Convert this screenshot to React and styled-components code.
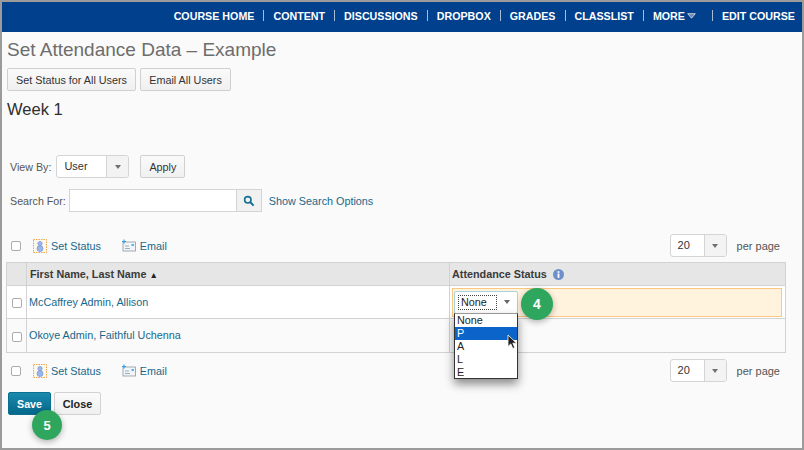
import React from "react";
import styled, { createGlobalStyle } from "styled-components";

const Global = createGlobalStyle`
  html, body { margin: 0; padding: 0; background: #fff; }
  body { font-family: "Liberation Sans", Arial, sans-serif; }
  * { box-sizing: border-box; }
`;

const Frame = styled.div`
  position: relative;
  width: 804px;
  height: 450px;
  border: 2px solid #9b9b9b;
  background: #fafafa;
  overflow: hidden;
`;
const TopBar = styled.nav`
  height: 30px;
  background: #00408c;
  display: flex;
  align-items: center;
  justify-content: flex-end;
  padding: 0 7px 3px 0;
  color: #fff;
  font-size: 10.7px;
  font-weight: 700;
`;
const NavItem = styled.span`
  display: inline-flex;
  align-items: center;
  white-space: nowrap;
`;
const NavSep = styled.span`
  width: 1px;
  height: 11px;
  background: #a9bcd6;
  margin: 0 9px 0 ${(p) => p.$left || 9}px;
`;
const Content = styled.main`
  padding: 0 22px 0 5px;
`;
const Title = styled.h1`
  margin: 0;
  height: 36px;
  line-height: 35px;
  font-size: 19px;
  font-weight: 400;
  color: #6d6d6d;
  white-space: nowrap;
`;
const ButtonRow = styled.div`
  display: flex;
  gap: ${(p) => p.$gap || 4}px;
`;
const Button = styled.button`
  height: 23px;
  width: ${(p) => p.$w}px;
  margin-left: ${(p) => p.$ml || 0}px;
  padding: 0;
  border: 1px solid #d0d0d0;
  border-radius: 2px;
  background: linear-gradient(#fafafa, #f0f0f0);
  font: 400 10.8px "Liberation Sans", Arial, sans-serif;
  color: #333;
`;
const Heading = styled.h2`
  margin: 0 0 26px;
  height: 38px;
  line-height: 36px;
  font-size: 16.5px;
  font-weight: 400;
  color: #2e2e2e;
`;
const FormRow = styled.div`
  display: flex;
  align-items: center;
  height: 23px;
  margin-left: 3px;
  margin-bottom: ${(p) => p.$mb || 0}px;
  font-size: 10.7px;
  color: #555;
`;
const SelectBox = styled.div`
  display: flex;
  width: ${(p) => p.$w}px;
  height: 23px;
  margin-left: ${(p) => p.$ml || 0}px;
  border: 1px solid #d4d4d4;
  border-radius: 3px;
  background: #fff;
  overflow: hidden;
  font-size: 11px;
  color: #333;
`;
const SelectValue = styled.span`
  flex: 1;
  padding-left: 7px;
  line-height: 21px;
`;
const SelectArrow = styled.span`
  width: 22px;
  display: flex;
  align-items: center;
  justify-content: center;
  border-left: 1px solid #d4d4d4;
  background: #f3f3f3;
  &::after {
    content: "";
    border-left: 3.5px solid transparent;
    border-right: 3.5px solid transparent;
    border-top: 4px solid #707070;
  }
`;
const SearchInput = styled.input`
  width: 167px;
  height: 23px;
  margin-left: 3px;
  border: 1px solid #d4d4d4;
  border-right: 0;
  background: #fff;
  padding: 0;
`;
const SearchBtn = styled.span`
  width: 26px;
  height: 23px;
  display: flex;
  align-items: center;
  justify-content: center;
  background: #f1f1f1;
  border: 1px solid #d4d4d4;
`;
const LinkText = styled.a`
  color: #17688a;
  font-size: 10.8px;
  white-space: nowrap;
  margin-left: ${(p) => p.$ml || 0}px;
`;
const Toolbar = styled.div`
  display: flex;
  align-items: center;
  height: 23px;
  margin-bottom: ${(p) => p.$mb || 0}px;
  padding-left: 4px;
`;
const Check = styled.input.attrs({ type: "checkbox" })`
  appearance: none;
  display: block;
  width: 10px;
  height: 10px;
  margin: 0;
  border: 1px solid #ababab;
  border-radius: 2px;
  background: #fff;
  flex: none;
`;
const ToolIcon = styled.svg`
  flex: none;
  margin-left: ${(p) => p.$ml}px;
`;
const ToolGap = styled.span`
  width: 21px;
  flex: none;
`;
const PerPage = styled.span`
  font-size: 11px;
  color: #555;
  margin-left: 10px;
  white-space: nowrap;
`;
const Spacer = styled.span`
  flex: 1;
`;
const Table = styled.table`
  width: 780px;
  margin: 0 0 6px -1px;
  border-collapse: collapse;
  table-layout: fixed;
`;
const ColTick = styled.col`
  width: 20px;
`;
const ColName = styled.col`
  width: 423px;
`;
const HeadCell = styled.th`
  height: 23px;
  background: #e6e6e6;
  border: 1px solid #d2d2d2;
  text-align: left;
  padding: 0 0 1px ${(p) => p.$left || 3}px;
  font-size: 10.8px;
  font-weight: 700;
  color: #3a3a3a;
  white-space: nowrap;
`;
const InfoIcon = styled.svg`
  margin-left: 6px;
  vertical-align: -2px;
`;
const Row = styled.tr`
  background: ${(p) => (p.$white ? "#fff" : "#fafafa")};
`;
const Cell = styled.td`
  height: ${(p) => p.$h}px;
  border: 1px solid #d2d2d2;
  padding: ${(p) => p.$pad || "0 0 3px 2px"};
  vertical-align: middle;
`;
const SortMark = styled.span`
  font-size: 8.5px;
  margin-left: 3px;
  color: #222;
`;
const Highlight = styled.div`
  height: 29px;
  margin-left: 2px;
  width: 330px;
  border: 1px solid #f9c77f;
  background: #fff3de;
  padding: 2px 1px;
`;
const FocusSelect = styled.div`
  display: flex;
  width: 64px;
  height: 23px;
  border: 1px solid #a9d3de;
  border-radius: 2px;
  background: #fff;
`;
const FocusValue = styled.span`
  width: 39px;
  height: 15px;
  margin: 3px 0 0 3px;
  border: 1px dotted #444;
  line-height: 13px;
  padding-left: 2px;
  font-size: 10.8px;
  color: #222;
`;
const FocusArrow = styled.span`
  flex: 1;
  display: flex;
  align-items: center;
  justify-content: center;
  &::after {
    content: "";
    border-left: 3.5px solid transparent;
    border-right: 3.5px solid transparent;
    border-top: 4px solid #666;
  }
`;
const Menu = styled.ul`
  position: absolute;
  left: 452px;
  top: 311px;
  width: 64px;
  margin: 0;
  padding: 0;
  height: 66px;
  list-style: none;
  background: #fff;
  border: 1px solid #333;
  border-top-color: #999;
  box-shadow: 0 5px 9px rgba(0, 0, 0, 0.45);
`;
const MenuItem = styled.li`
  height: 13px;
  line-height: 13px;
  padding-left: 2px;
  font-size: 10.8px;
  background: ${(p) => (p.$active ? "#0a64c9" : "transparent")};
  color: ${(p) => (p.$active ? "#fff" : "#222")};
`;
const Cursor = styled.svg`
  position: absolute;
  left: 505px;
  top: 332px;
`;
const Badge = styled.span`
  position: absolute;
  left: ${(p) => p.$x}px;
  top: ${(p) => p.$y}px;
  width: ${(p) => p.$d}px;
  height: ${(p) => p.$d}px;
  border-radius: 50%;
  background: #2fa65d;
  color: #fff;
  font-size: ${(p) => p.$fs}px;
  font-weight: 700;
  display: flex;
  align-items: center;
  justify-content: center;
  box-shadow: 0 2px 6px rgba(0, 0, 0, 0.3);
`;
const Save = styled.button`
  width: 43px;
  height: 23px;
  padding: 0;
  margin-left: 1px;
  border: 1px solid #0b6f90;
  border-radius: 2px;
  background: linear-gradient(#1b89ad, #04688b);
  color: #fff;
  font: 700 10.7px "Liberation Sans", Arial, sans-serif;
`;
const Close = styled.button`
  width: 47px;
  height: 23px;
  padding: 0;
  border: 1px solid #d2d2d2;
  border-radius: 2px;
  background: linear-gradient(#fafafa, #f0f0f0);
  color: #222;
  font: 700 10.8px "Liberation Sans", Arial, sans-serif;
`;

const StatusIcon = () => (
  <ToolIcon $ml={12} width="14" height="14" viewBox="0 0 14 14">
    <rect x="0.5" y="0.5" width="13" height="13" fill="#fdf8ee" stroke="#eda64a" strokeDasharray="1.5 1" />
    <circle cx="7" cy="4.6" r="2.2" fill="#9db6e8" stroke="#6f8fd8" strokeWidth="0.6" />
    <ellipse cx="7" cy="9.6" rx="3" ry="3" fill="#9db6e8" stroke="#6f8fd8" strokeWidth="0.6" />
  </ToolIcon>
);
const MailIcon = () => (
  <ToolIcon $ml={0} width="14" height="13" viewBox="0 0 14 13">
    <rect x="1" y="3" width="12.5" height="9" fill="#f2f5f7" stroke="#8d979e" strokeWidth="0.8" />
    <path d="M3 7h4M3 9.5h5" stroke="#9aa5ad" strokeWidth="0.9" />
    <rect x="9.5" y="5" width="2.5" height="2" fill="#58b4ea" />
    <path d="M2 0.5v4M0 2.5h4" stroke="#2f9fe6" strokeWidth="1.1" />
  </ToolIcon>
);

function ListActions() {
  return (
    <>
      <Check />
      <StatusIcon />
      <LinkText $ml={4}>Set Status</LinkText>
      <ToolGap />
      <MailIcon />
      <LinkText $ml={4}>Email</LinkText>
      <Spacer />
      <SelectBox $w={57}>
        <SelectValue>20</SelectValue>
        <SelectArrow />
      </SelectBox>
      <PerPage>per page</PerPage>
    </>
  );
}

export default function App() {
  const nav = ["COURSE HOME", "CONTENT", "DISCUSSIONS", "DROPBOX", "GRADES", "CLASSLIST"];
  return (
    <Frame>
      <Global />
      <TopBar>
        {nav.map((n) => (
          <React.Fragment key={n}>
            <NavItem>{n}</NavItem>
            <NavSep />
          </React.Fragment>
        ))}
        <NavItem>
          MORE
          <svg width="9" height="6" viewBox="0 0 9 6" style={{ marginLeft: 2 }}>
            <path d="M0.7 0.7h7.6L4.5 5.2z" fill="#6f87ad" stroke="#cfd8e6" strokeWidth="0.9" />
          </svg>
        </NavItem>
        <NavSep $left={16} />
        <NavItem>EDIT COURSE</NavItem>
      </TopBar>
      <Content>
        <Title>Set Attendance Data – Example</Title>
        <ButtonRow>
          <Button $w={129}>Set Status for All Users</Button>
          <Button $w={91}>Email All Users</Button>
        </ButtonRow>
        <Heading>Week 1</Heading>
        <FormRow $mb={11}>
          <span>View By:</span>
          <SelectBox $w={73} $ml={5}>
            <SelectValue>User</SelectValue>
            <SelectArrow />
          </SelectBox>
          <Button $w={45} $ml={11}>Apply</Button>
        </FormRow>
        <FormRow $mb={22}>
          <span>Search For:</span>
          <SearchInput aria-label="Search For" />
          <SearchBtn>
            <svg width="12" height="12" viewBox="0 0 12 12">
              <circle cx="4.8" cy="4.8" r="3.2" fill="none" stroke="#15708f" strokeWidth="1.6" />
              <path d="M7.3 7.3L10.6 10.6" stroke="#15708f" strokeWidth="2" />
            </svg>
          </SearchBtn>
          <LinkText $ml={7}>Show Search Options</LinkText>
        </FormRow>
        <Toolbar $mb={5}>
          <ListActions />
        </Toolbar>
        <Table>
          <colgroup>
            <ColTick />
            <ColName />
            <col />
          </colgroup>
          <thead>
            <tr>
              <HeadCell />
              <HeadCell>
                First Name, Last Name<SortMark>▲</SortMark>
              </HeadCell>
              <HeadCell $left={2}>
                Attendance Status
                <InfoIcon width="11" height="11" viewBox="0 0 12 12">
                  <circle cx="6" cy="6" r="6" fill="#6f8fcb" />
                  <rect x="5" y="5" width="2" height="4.6" fill="#fff" />
                  <rect x="5" y="2.4" width="2" height="1.8" fill="#fff" />
                </InfoIcon>
              </HeadCell>
            </tr>
          </thead>
          <tbody>
            <Row $white>
              <Cell $h={33} $pad="2px 0 0 5px"><Check /></Cell>
              <Cell $h={33}><LinkText>McCaffrey Admin, Allison</LinkText></Cell>
              <Cell $h={33} $pad="0">
                <Highlight>
                  <FocusSelect>
                    <FocusValue>None</FocusValue>
                    <FocusArrow />
                  </FocusSelect>
                </Highlight>
              </Cell>
            </Row>
            <Row>
              <Cell $h={34} $pad="2px 0 0 5px"><Check /></Cell>
              <Cell $h={34}><LinkText>Okoye Admin, Faithful Uchenna</LinkText></Cell>
              <Cell $h={34} />
            </Row>
          </tbody>
        </Table>
        <Toolbar $mb={10}>
          <ListActions />
        </Toolbar>
        <ButtonRow $gap={3}>
          <Save>Save</Save>
          <Close>Close</Close>
        </ButtonRow>
      </Content>
      <Menu>
        <MenuItem>None</MenuItem>
        <MenuItem $active>P</MenuItem>
        <MenuItem>A</MenuItem>
        <MenuItem>L</MenuItem>
        <MenuItem>E</MenuItem>
      </Menu>
      <Cursor width="12" height="16" viewBox="0 0 12 16">
        <path d="M1 1v11.5l2.8-2.6 2 4.6 2-.9-2-4.4h3.8z" fill="#222" stroke="#fff" strokeWidth="0.8" />
      </Cursor>
      <Badge $x={519} $y={286} $d={32} $fs={14}>4</Badge>
      <Badge $x={30} $y={408} $d={30} $fs={13}>5</Badge>
    </Frame>
  );
}
